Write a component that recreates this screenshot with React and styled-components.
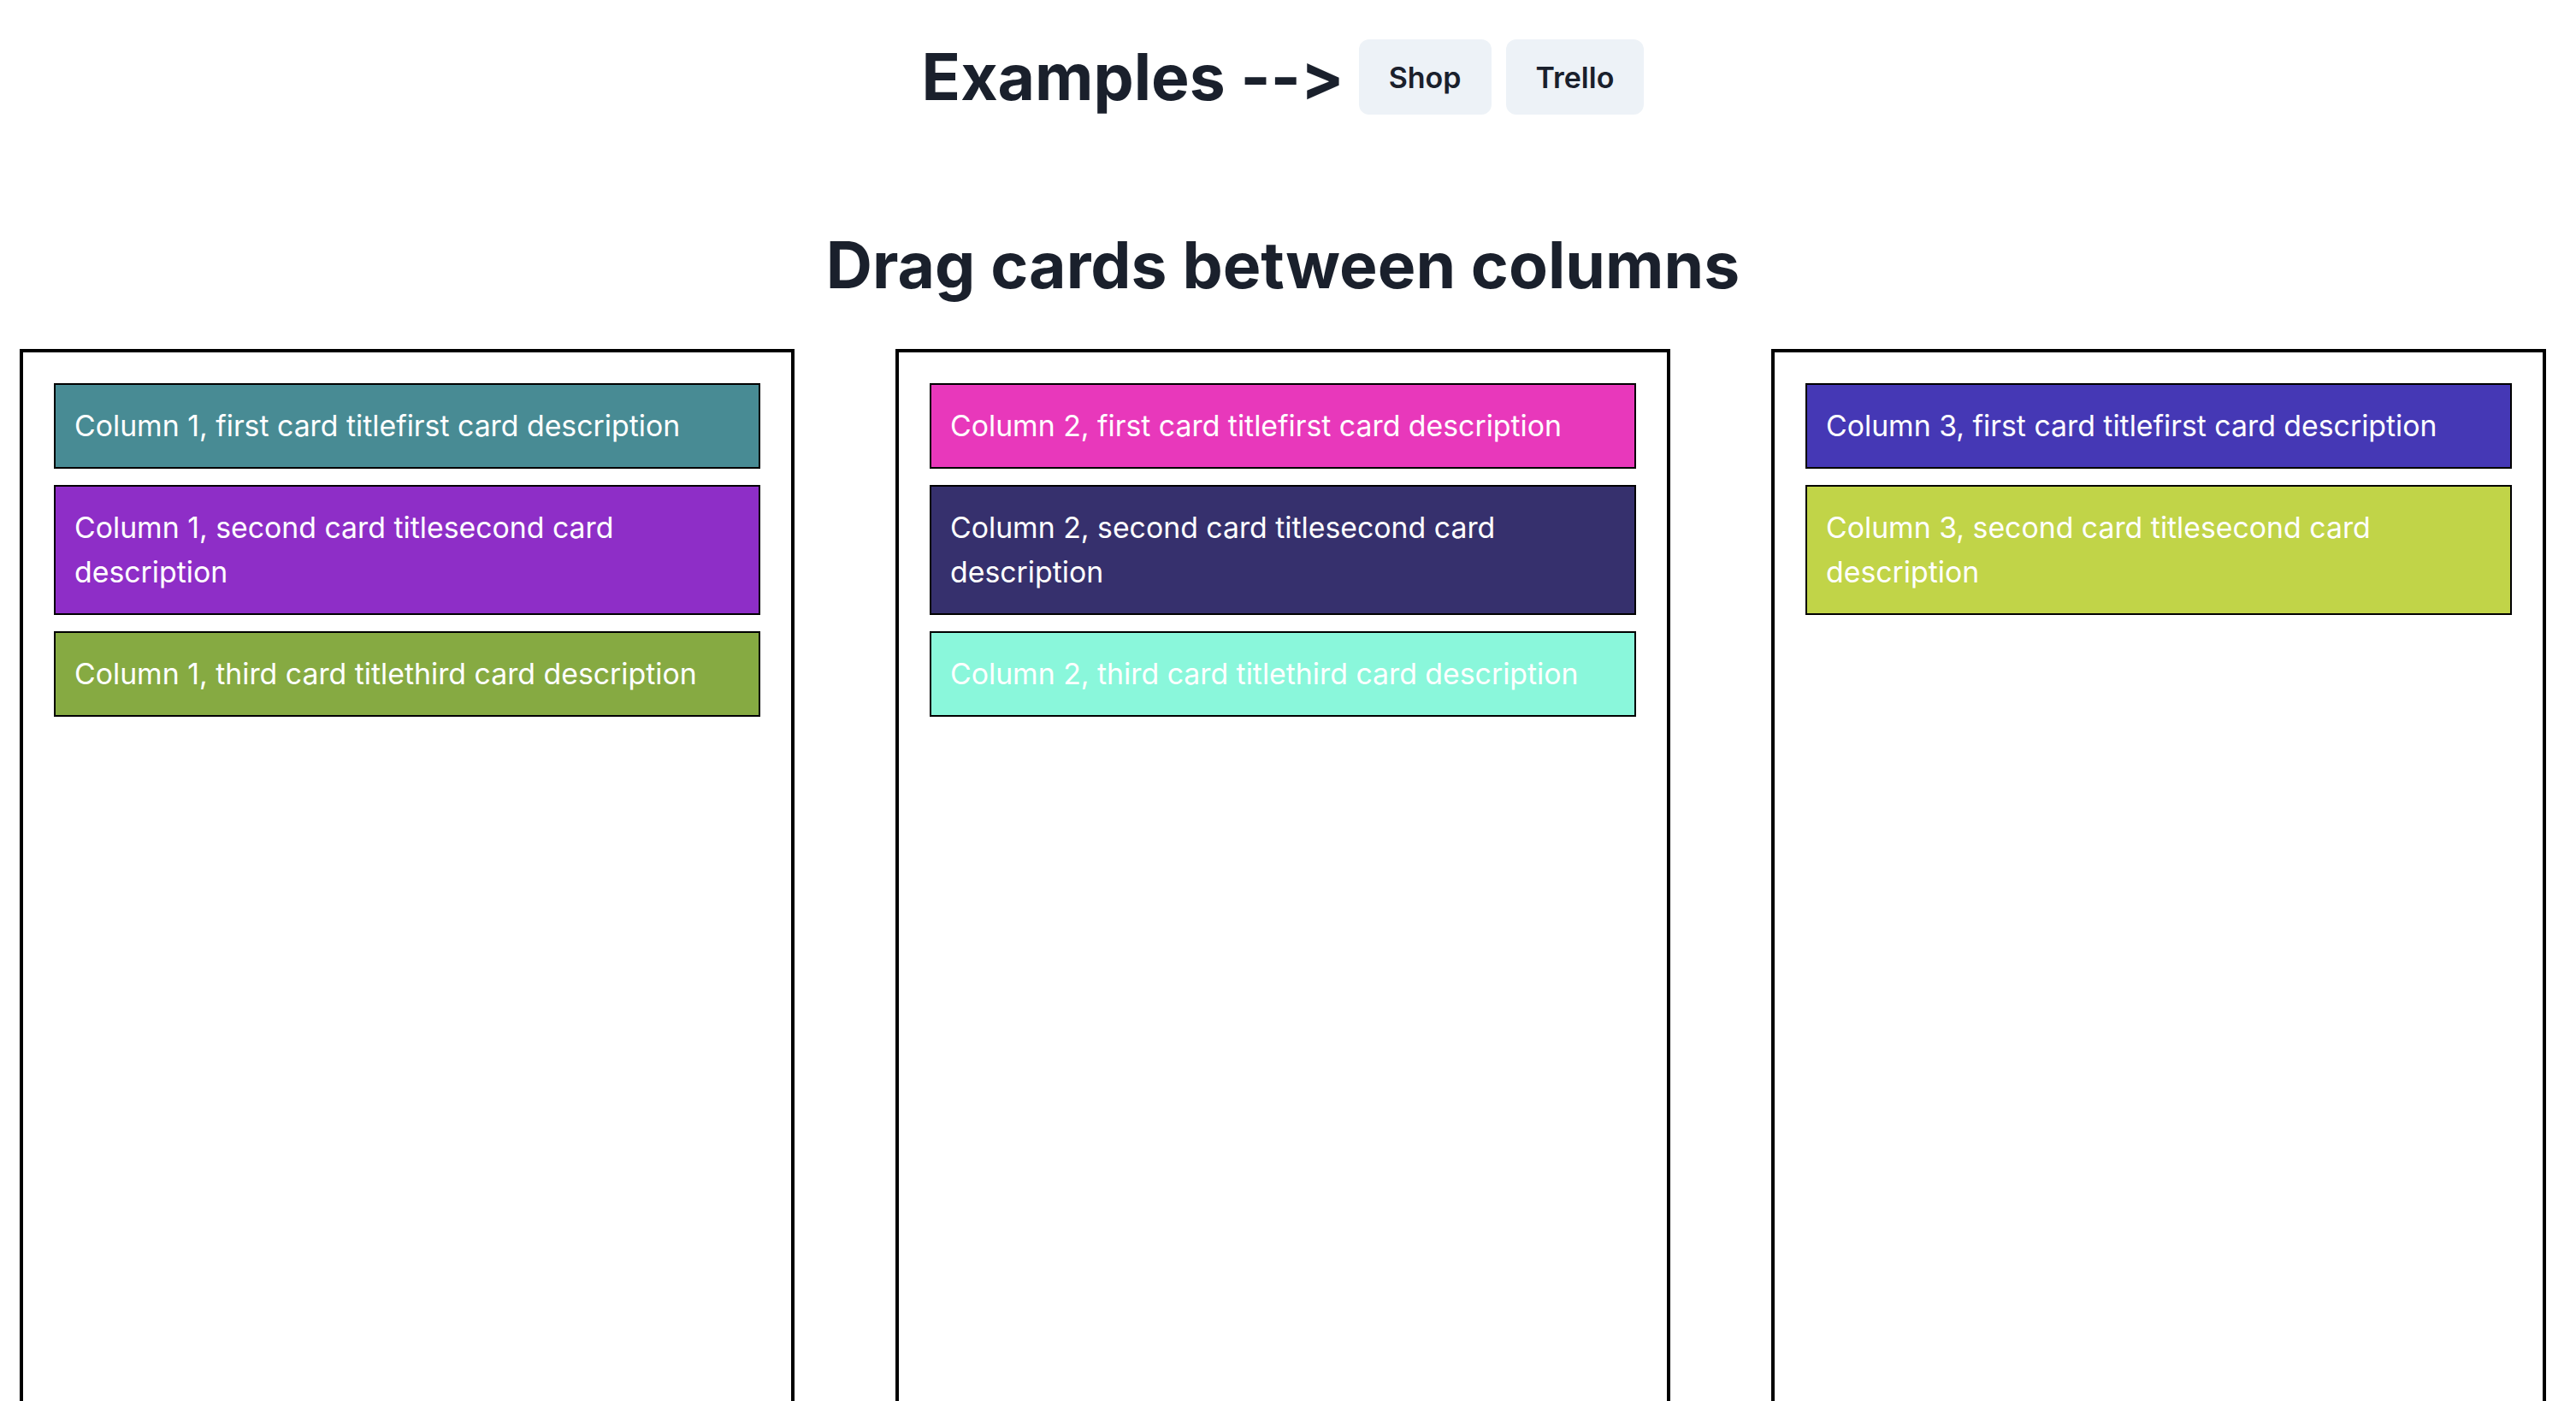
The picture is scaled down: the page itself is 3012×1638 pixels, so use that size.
import React from "react";
import styled, { createGlobalStyle } from "styled-components";

const GlobalStyle = createGlobalStyle`
  html, body {
    margin: 0;
    padding: 0;
    background: #ffffff;
    overflow: hidden;
  }
  body {
    font-family: Inter, "Noto Sans", "Liberation Sans", sans-serif;
    color: #1a202c;
    font-feature-settings: "calt" 0, "liga" 0;
    font-variant-ligatures: none;
  }
  * { box-sizing: border-box; }
`;

const Page = styled.div`
  display: flex;
  flex-direction: column;
  align-items: stretch;
  padding-top: 46px;
  padding-right: 12px;
`;

const TopBar = styled.div`
  display: flex;
  align-items: center;
  justify-content: center;
  gap: 17px;
  height: 88px;
`;

const Heading = styled.h2`
  margin: 0;
  font-family: Inter, "Noto Sans", "Liberation Sans", sans-serif;
  font-weight: 700;
  font-size: 75px;
  line-height: 1.2;
  color: #1a202c;
  text-align: center;
  font-feature-settings: "calt" 0, "liga" 0;
  font-variant-ligatures: none;
`;

const NavButton = styled.button`
  height: 88px;
  padding: 0 35px;
  border: none;
  border-radius: 12px;
  background: #edf2f7;
  color: #1a202c;
  font-family: Inter, "Noto Sans", "Liberation Sans", sans-serif;
  font-weight: 600;
  font-size: 34px;
  cursor: pointer;
`;

const SubHeading = styled(Heading)`
  margin-top: 131px;
`;

const Board = styled.div`
  display: grid;
  grid-template-columns: repeat(3, 906px);
  column-gap: 118px;
  padding-left: 23px;
  margin-top: 53px;
`;

const Column = styled.div`
  height: 1400px;
  border: 4px solid #000000;
  padding: 36px;
  display: flex;
  flex-direction: column;
  gap: 19px;
`;

const Card = styled.div`
  background: ${(p) => p.$bg};
  border: 2px solid #000000;
  padding: 22px 22px;
  color: #ffffff;
  font-family: Inter, "Noto Sans", "Liberation Sans", sans-serif;
  font-size: 33.8px;
  line-height: 52px;
`;

const columns = [
  {
    id: 1,
    cards: [
      { t: "first", bg: "#488b94" },
      { t: "second", bg: "#8e2ec7" },
      { t: "third", bg: "#86aa42" },
    ],
  },
  {
    id: 2,
    cards: [
      { t: "first", bg: "#e838bb" },
      { t: "second", bg: "#36306d" },
      { t: "third", bg: "#8af7db" },
    ],
  },
  {
    id: 3,
    cards: [
      { t: "first", bg: "#4538b5" },
      { t: "second", bg: "#c1d448" },
    ],
  },
];

export default function App() {
  return (
    <>
      <GlobalStyle />
      <Page>
        <TopBar>
          <Heading>Examples --&gt;</Heading>
          <NavButton>Shop</NavButton>
          <NavButton>Trello</NavButton>
        </TopBar>
        <SubHeading>Drag cards between columns</SubHeading>
        <Board>
          {columns.map((col) => (
            <Column key={col.id}>
              {col.cards.map((c) => (
                <Card key={c.t} $bg={c.bg}>
                  {`Column ${col.id}, ${c.t} card title${c.t} card description`}
                </Card>
              ))}
            </Column>
          ))}
        </Board>
      </Page>
    </>
  );
}
